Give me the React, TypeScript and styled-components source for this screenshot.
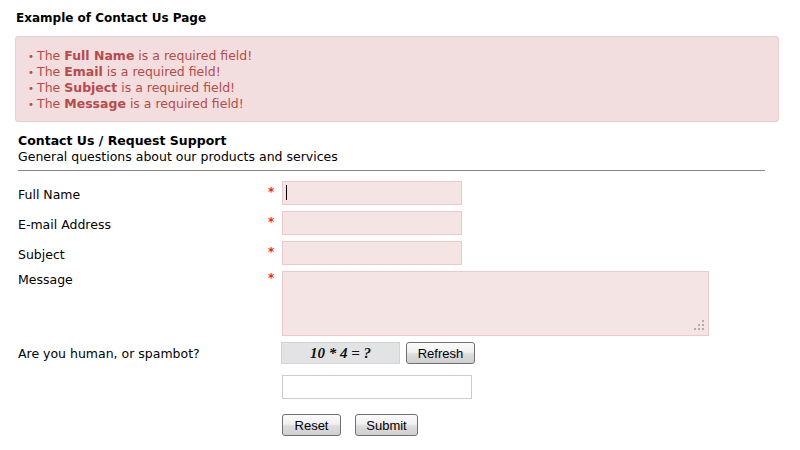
import React from "react";
import styled, { createGlobalStyle } from "styled-components";

const GlobalStyle = createGlobalStyle`
    body {
        margin: 0;
        background: #ffffff;
        font-family: "DejaVu Sans", Verdana, sans-serif;
        font-size: 12.5px;
        color: #000;
    }
`;

const Page = styled.div`
    padding: 10px 0 0 15px;
    width: 764px;
`;

const Title = styled.h1`
    margin: 0 0 10px 1px;
    font-size: 12px;
    line-height: 16px;
    font-weight: bold;
`;

const Alert = styled.div`
    background: #f2dede;
    border: 1px solid #ebccd1;
    border-radius: 3px;
    color: #b94a48;
    padding: 11px 0 9px 0;
`;

const ErrorList = styled.ul`
    margin: 0;
    padding-left: 21px;
    line-height: 16px;
    list-style: none;

    li {
        position: relative;
    }

    li::before {
        content: "•";
        position: absolute;
        left: -9px;
        top: 0;
        font-size: 10px;
        line-height: 17px;
    }
`;

const Form = styled.form`
    padding: 11px 0 0 3px;
`;

const Heading = styled.div`
    font-weight: bold;
    line-height: 16px;
`;

const SubHeading = styled.div`
    line-height: 16px;
`;

const Rule = styled.div`
    width: 747px;
    height: 1px;
    background: #888;
    margin: 5px 0 10px 0;
`;

const Row = styled.div<{ $gap: number; $top?: boolean }>`
    display: flex;
    align-items: ${(p) => (p.$top ? "flex-start" : "center")};
    margin-bottom: ${(p) => p.$gap}px;
`;

const Label = styled.div<{ $pad?: number }>`
    width: 250px;
    flex: none;
    line-height: 16px;
    padding-top: ${(p) => p.$pad ?? 4}px;
`;

const Star = styled.div<{ $pad?: number }>`
    width: 14px;
    flex: none;
    align-self: flex-start;
    color: #f22;
    font-size: 12px;
    font-weight: bold;
    line-height: 10px;
    padding-top: ${(p) => p.$pad ?? 6}px;
`;

const FieldWrap = styled.div`
    position: relative;
    display: flex;
`;

const TextInput = styled.input<{ $width: number; $plain?: boolean }>`
    box-sizing: border-box;
    width: ${(p) => p.$width}px;
    height: 24px;
    margin: 0;
    padding: 2px 4px;
    background: ${(p) => (p.$plain ? "#fff" : "#f5e4e4")};
    border: 1px solid ${(p) => (p.$plain ? "#cccccc" : "#ebc9cd")};
    font-family: "DejaVu Sans", sans-serif;
    font-size: 12px;
    outline: none;
`;

const Caret = styled.span`
    position: absolute;
    left: 4px;
    top: 4px;
    width: 1px;
    height: 15px;
    background: #000;
`;

const TextArea = styled.textarea`
    box-sizing: border-box;
    width: 427px;
    height: 65px;
    margin: 0;
    background: #f5e4e4;
    border: 1px solid #ebc9cd;
    resize: none;
    outline: none;
    font-family: "DejaVu Sans", sans-serif;
    font-size: 12px;
`;

const Grip = styled.svg`
    position: absolute;
    right: 4px;
    bottom: 5px;
`;

const Captcha = styled.div`
    box-sizing: border-box;
    width: 119px;
    height: 22px;
    margin-left: -1px;
    background: #e2e3e4;
    border: 1px solid #d3d3d3;
    display: flex;
    align-items: center;
    justify-content: center;
    font-family: "Liberation Serif", Georgia, serif;
    font-style: italic;
    font-weight: bold;
    font-size: 15px;
    color: #111;
`;

const Button = styled.button<{ $width: number }>`
    box-sizing: border-box;
    width: ${(p) => p.$width}px;
    height: 22px;
    margin: 0;
    padding: 0;
    border: 1px solid #707070;
    border-radius: 3px;
    background: linear-gradient(#fbfbfb 0%, #f0f0f0 45%, #dcdcdc 55%, #d0d0d0 100%);
    font-family: "Liberation Sans", Arial, sans-serif;
    font-size: 13px;
    color: #000;
`;

const Buttons = styled.div`
    display: flex;
    gap: 14px;
    margin-left: 264px;
`;

const fields = [
    { label: "Full Name", caret: true },
    { label: "E-mail Address" },
    { label: "Subject" },
];

export default function App() {
    return (
        <>
            <GlobalStyle />
            <Page>
                <Title>Example of Contact Us Page</Title>
                <Alert>
                    <ErrorList>
                        <li>The <b>Full Name</b> is a required field!</li>
                        <li>The <b>Email</b> is a required field!</li>
                        <li>The <b>Subject</b> is a required field!</li>
                        <li>The <b>Message</b> is a required field!</li>
                    </ErrorList>
                </Alert>
                <Form onSubmit={(e) => e.preventDefault()}>
                    <Heading>Contact Us / Request Support</Heading>
                    <SubHeading>General questions about our products and services</SubHeading>
                    <Rule />
                    {fields.map((f) => (
                        <Row key={f.label} $gap={6}>
                            <Label>{f.label}</Label>
                            <Star>*</Star>
                            <FieldWrap>
                                <TextInput $width={180} />
                                {f.caret && <Caret />}
                            </FieldWrap>
                        </Row>
                    ))}
                    <Row $gap={6} $top>
                        <Label $pad={1}>Message</Label>
                        <Star $pad={2}>*</Star>
                        <FieldWrap>
                            <TextArea />
                            <Grip width="12" height="12" viewBox="0 0 12 12">
                                <g fill="#b9a9aa">
                                    <rect x="9" y="1" width="2" height="2" />
                                    <rect x="5" y="5" width="2" height="2" />
                                    <rect x="9" y="5" width="2" height="2" />
                                    <rect x="1" y="9" width="2" height="2" />
                                    <rect x="5" y="9" width="2" height="2" />
                                    <rect x="9" y="9" width="2" height="2" />
                                </g>
                            </Grip>
                        </FieldWrap>
                    </Row>
                    <Row $gap={11}>
                        <Label $pad={2}>Are you human, or spambot?</Label>
                        <Star />
                        <Captcha>10 * 4 = ?</Captcha>
                        <Button type="button" $width={69} style={{ marginLeft: 6 }}>Refresh</Button>
                    </Row>
                    <Row $gap={15}>
                        <Label />
                        <Star />
                        <TextInput $width={190} $plain />
                    </Row>
                    <Buttons>
                        <Button type="reset" $width={59}>Reset</Button>
                        <Button type="submit" $width={63}>Submit</Button>
                    </Buttons>
                </Form>
            </Page>
        </>
    );
}
